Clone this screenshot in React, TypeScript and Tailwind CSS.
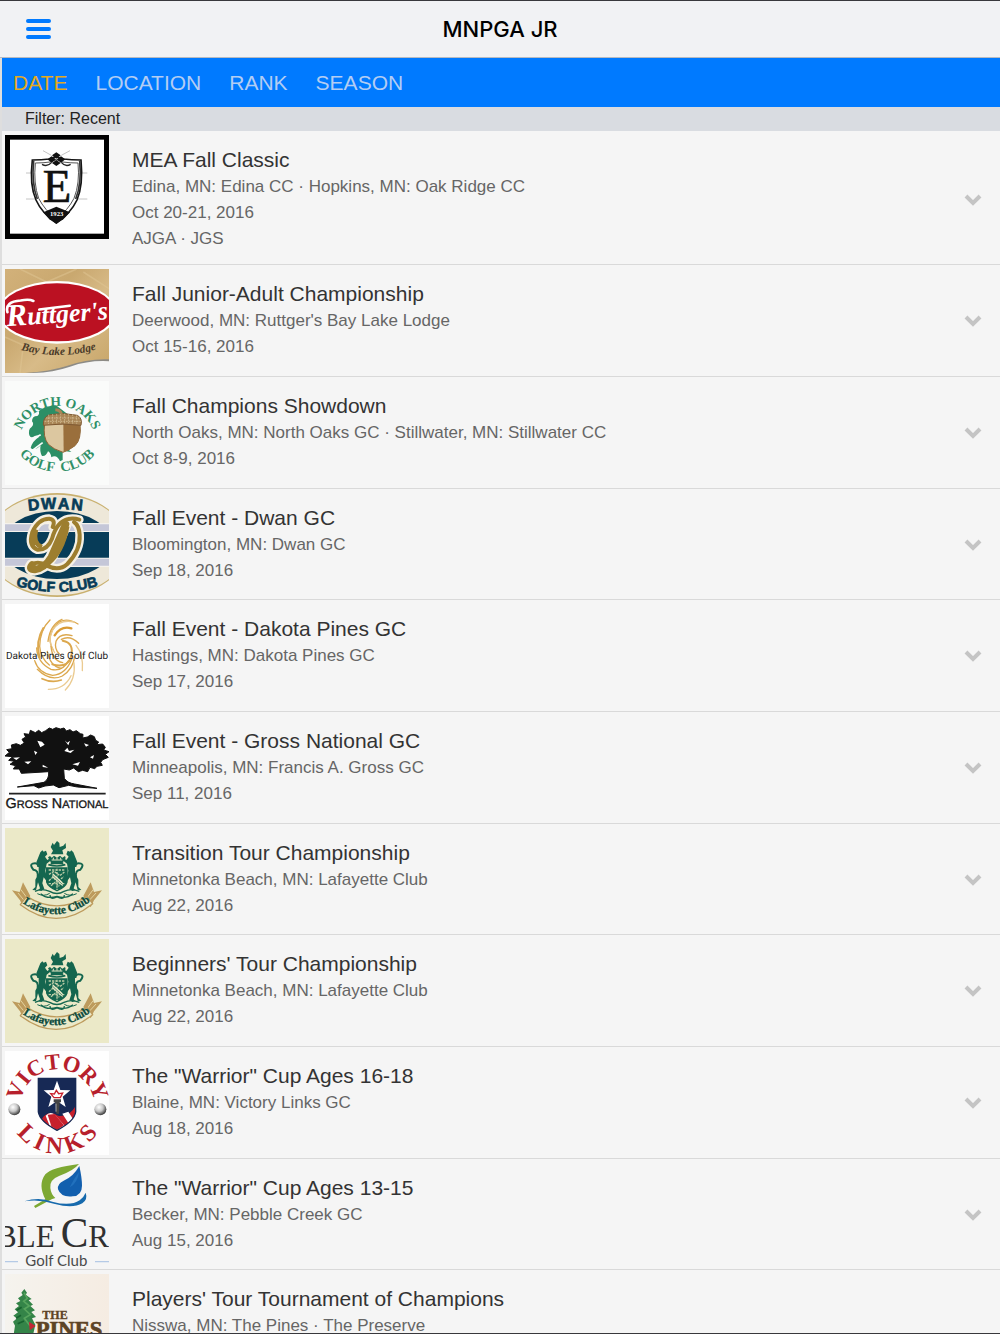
import React from "react";

const serif = "'Liberation Serif', serif";
const sans = "'Liberation Sans', Arial, sans-serif";

function Frame({ box, label, children }: { box: string; label: string; children: React.ReactNode }) {
  return (
    <svg viewBox={box} role="img" aria-label={label} className="block size-[104px] shrink-0 overflow-hidden">
      {children}
    </svg>
  );
}

function EdinaLogo() {
  return (
    <Frame box="15 15 312 312" label="Edina Country Club">
      <rect x="15" y="15" width="312" height="312" fill="#000" />
      <rect x="30" y="29" width="282" height="282" fill="#fff" />
      <path d="M78 129H262M78 207H262M129 62L154 76M210 62L184 76" stroke="#c4c4c4" strokeWidth="3" />
      <path d="M97 90Q125 90 148 87L168 80L190 87Q215 90 243 90Q250 165 231 210Q212 250 169 279Q126 250 108 210Q88 165 97 90Z" fill="#fff" stroke="#161616" strokeWidth="5" />
      <path d="M106 99Q130 99 150 96L169 89L188 96Q210 99 234 99Q240 160 222 205Q204 240 169 268Q134 240 116 205Q100 160 106 99Z" fill="#fff" stroke="#555" strokeWidth="3" />
      <path d="M101 92Q94 160 112 207M239 92Q246 160 227 207" fill="none" stroke="#333" strokeWidth="5" />
      <path d="M169 67L182 76L169 86L156 76ZM155 79L168 88L155 98L142 88ZM183 79L196 88L183 98L170 88ZM169 90L182 99L169 108L156 99Z" fill="#111" />
      <path d="M126 103Q142 112 155 97M212 103Q196 112 184 97" fill="none" stroke="#222" strokeWidth="4" />
      <text x="171" y="216" textAnchor="middle" fontFamily={serif} fontSize="140" fill="#111" stroke="#111" strokeWidth="2">E</text>
      <path d="M130 247L169 230L210 247L190 268L169 281L148 268Z" fill="#111" />
      <text x="170" y="257" textAnchor="middle" fontFamily={serif} fontWeight="700" fontSize="20" fill="#fff">1923</text>
    </Frame>
  );
}

function RuttgersLogo() {
  return (
    <Frame box="15 21 312 312" label="Ruttger's Bay Lake Lodge">
      <defs>
        <linearGradient id="kraft" x1="0" y1="0" x2="1" y2="1">
          <stop offset="0" stopColor="#d2b17a" />
          <stop offset=".35" stopColor="#c9a86f" />
          <stop offset=".6" stopColor="#d8bb88" />
          <stop offset="1" stopColor="#c7a568" />
        </linearGradient>
        <path id="lodge-curve" d="M40 257Q180 302 312 255" />
      </defs>
      <rect x="15" y="21" width="312" height="312" fill="url(#kraft)" />
      <path d="M60 21L140 60L230 21M15 225L70 250L60 333M250 30L327 80" fill="none" stroke="#dfc594" strokeWidth="5" opacity=".5" />
      <path d="M75 333Q150 328 200 312Q265 289 327 292V300Q270 296 210 320L180 333Z" fill="#8d8b86" />
      <path d="M100 333Q160 331 210 314Q270 294 327 298V333Z" fill="#f5f5f5" />
      <ellipse cx="171" cy="151" rx="178" ry="94" fill="#fff" />
      <ellipse cx="171" cy="151" rx="172" ry="87" fill="#bb1122" />
      <g transform="rotate(-4 171 170)">
        <text x="172" y="182" textAnchor="middle" fontFamily={serif} fontStyle="italic" fontWeight="700" fill="#fff" fontSize="78">
          <tspan fontSize="94">R</tspan>uttger's
        </text>
        <path d="M24 140Q18 108 66 108Q92 105 104 112M120 139L212 134" fill="none" stroke="#fff" strokeWidth="8" strokeLinecap="round" />
      </g>
      <text fontFamily={serif} fontStyle="italic" fontWeight="700" fontSize="34" fill="#4c3c2a" textAnchor="middle">
        <textPath href="#lodge-curve" startOffset="50%">Bay Lake Lodge</textPath>
      </text>
    </Frame>
  );
}

function NorthOaksLogo() {
  return (
    <Frame box="15 21 312 312" label="North Oaks Golf Club">
      <defs>
        <path id="oaks-top" d="M56 212A116 116 0 0 1 288 212" />
        <path id="oaks-bottom" d="M28 185A150 150 0 0 0 316 185" />
      </defs>
      <rect x="15" y="21" width="312" height="312" fill="#fafbfa" />
      <path d="M168 94Q130 98 116 112Q120 120 112 126Q96 126 96 142Q104 150 94 160Q84 166 88 184Q92 194 104 186Q112 182 118 188Q96 202 92 222Q104 232 122 214Q118 232 126 246Q138 248 144 232Q152 236 154 250Q170 240 180 262L188 258V230L214 234L196 220L215 130Z" fill="#2c8f66" />
      <path d="M86 200L122 182M96 230L128 206" stroke="#fafbfa" strokeWidth="5" />
      <path d="M134 150H240Q245 196 225 215Q208 228 189 235Q160 226 145 211Q128 190 134 150Z" fill="#dcc7a0" stroke="#8b6337" strokeWidth="3" />
      <path d="M190 150H240Q245 196 225 215Q208 228 191 234Z" fill="#9a6f3c" />
      <path d="M130 154Q128 128 150 122Q188 114 232 124Q248 132 243 154Q188 146 130 154Z" fill="#a98556" stroke="#7f5a33" strokeWidth="3" />
      <path d="M138 132L240 132M134 142H243M146 122V150M158 120V149M170 120V148M182 119V148M194 119V148M206 120V148M218 121V149M230 124V150" stroke="#e0cda6" strokeWidth="2" strokeDasharray="5 3" />
      <path d="M184 120Q182 108 166 107" fill="none" stroke="#a98556" strokeWidth="9" />
      <g fontFamily={serif} fontWeight="700" fill="#2f9067" textAnchor="middle">
        <text fontSize="41"><textPath href="#oaks-top" startOffset="50%">NORTH OAKS</textPath></text>
        <text fontSize="42"><textPath href="#oaks-bottom" startOffset="50%">GOLF{"\u00a0\u00a0"}CLUB</textPath></text>
      </g>
    </Frame>
  );
}

function DwanLogo() {
  return (
    <Frame box="15 18 312 312" label="Dwan Golf Club">
      <defs>
        <path id="dwan-top" d="M60 76Q166 56 272 76" />
        <path id="dwan-bottom" d="M24 289Q171 340 318 289" />
      </defs>
      <ellipse cx="171" cy="174" rx="212" ry="156" fill="#c9b06f" />
      <ellipse cx="171" cy="174" rx="212" ry="151" fill="#eee8d9" />
      <ellipse cx="171" cy="174" rx="167" ry="102" fill="#073c58" />
      <path d="M15 108H327V240H15Z" fill="#f5f2ec" />
      <path d="M15 112H327V132H15ZM15 215H327V236H15Z" fill="#c5c7d8" />
      <path d="M15 135H327V212H15Z" fill="#073c58" />
      {[
        { w: 26, c: "#f6f1e5" },
        { w: 12, c: "#9d7e2f" },
      ].map(({ w, c }) => (
        <g key={c} fill="none" stroke={c} strokeWidth={w} strokeLinecap="round" strokeLinejoin="round">
          <path d="M158 120Q168 98 148 95Q116 94 97 135Q84 176 112 188Q142 190 156 155Q170 104 205 96Q220 92 238 98" />
          <path d="M96 232Q116 221 140 236Q177 254 202 231Q242 190 239 143Q237 115 222 105" />
          <path d="M96 234Q85 248 104 248Q134 244 154 210L197 112" strokeWidth={w + 10} />
        </g>
      ))}
      <path d="M101 177Q91 155 108 128Q98 170 126 180M158 215Q176 198 202 118Q188 195 145 229" fill="none" stroke="#9d7e2f" strokeWidth="13" />
      <g fontFamily={sans} fontWeight="700" fill="#073c58" stroke="#073c58" strokeWidth="2" textAnchor="middle">
        <text fontSize="48"><textPath href="#dwan-top" startOffset="50%">{"D\u200aW\u200aA\u200aN"}</textPath></text>
        <text fontSize="43"><textPath href="#dwan-bottom" startOffset="50%">GOLF CLUB</textPath></text>
      </g>
    </Frame>
  );
}

function DakotaLogo() {
  return (
    <Frame box="15 18 312 312" label="Dakota Pines Golf Club">
      <rect x="15" y="18" width="312" height="312" fill="#fff" />
      <g fill="none" stroke="#dca84e" strokeWidth="4" strokeLinecap="round">
        <path d="M234 78Q190 52 165 85Q138 120 160 156" />
        <path d="M222 72Q180 62 158 96Q140 130 164 164" stroke="#eac98e" />
        <path d="M214 91Q184 82 164 112" strokeWidth="7" stroke="#d99a34" />
        <path d="M186 64Q150 80 144 130" />
        <path d="M150 66Q120 95 119 145Q121 180 148 201" />
        <path d="M130 90Q106 130 118 177" strokeWidth="6" />
        <path d="M216 113Q180 103 168 130Q162 152 178 168" />
        <path d="M236 136Q210 110 184 124" />
        <path d="M188 128Q224 134 213 178Q200 212 157 199" strokeWidth="6" />
        <path d="M110 150Q112 194 153 214Q188 222 206 188" />
        <path d="M104 188Q116 226 158 232Q197 230 215 184" />
        <path d="M112 214Q150 252 187 234Q219 214 224 176" />
        <path d="M126 242Q156 256 184 246" strokeWidth="5" />
        <path d="M196 276Q228 244 222 194M145 274Q194 274 213 233M247 218Q251 169 228 142" stroke="#ebcb91" />
        <path d="M153 145Q157 188 188 194M142 160Q150 205 184 211" />
      </g>
      <text x="171" y="182" textAnchor="middle" fontFamily="Roboto, sans-serif" fontWeight="400" fontSize="30" textRendering="geometricPrecision" fill="#222">Dakota Pines Golf Club</text>
    </Frame>
  );
}

function GrossLogo() {
  return (
    <Frame box="15 15 312 312" label="Gross National">
      <rect x="15" y="15" width="312" height="312" fill="#fff" />
      <path d="M146 182L64 187L58 174L40 174L47 164L30 160L43 151L26 148L38 137L15 135L28 124L20 116L36 113L34 102L49 98L61 103L73 96L66 85L77 78L72 68L88 70L91 58L106 65L116 58L125 65L137 59L148 51L158 55L168 50L181 54L192 51L199 60L210 56L219 63L229 59L241 68L249 70L248 81L262 78L272 72L283 77L287 88L296 93L290 101L308 99L316 109L311 117L327 122L316 130L325 139L308 146L302 154L307 163L291 166L284 173L270 169L263 182L248 178L235 182L221 171L208 177L191 174L193 202Q202 216 224 219L291 232L232 228L206 223L177 230L160 222L135 225L116 231L102 224L52 228L132 214Q148 204 146 182Z" fill="#111" stroke="#111" strokeWidth="3" strokeLinejoin="round" />
      <path d="M112 89L126 92L134 101L121 109ZM194 88L202 95L210 89L205 103ZM102 119L112 124L106 132ZM193 120L202 110L207 120L223 116L212 126ZM39 140L60 139L49 147ZM73 152L94 151L84 160ZM217 160L240 153L234 164ZM252 97L267 102L258 107ZM270 139L282 132L279 143ZM128 161L145 170L128 168Z" fill="#fff" />
      <path d="M27 248H317" stroke="#222" strokeWidth="5" />
      <text x="171" y="292" textAnchor="middle" fontFamily={sans} fontSize="43" textRendering="geometricPrecision" fill="#161616" stroke="#161616" strokeWidth="1">
        G<tspan fontSize="33">ROSS</tspan> N<tspan fontSize="33">ATIONAL</tspan>
      </text>
    </Frame>
  );
}

function Supporter() {
  return (
    <g>
      <path d="M121 88L127 82L131 86L138 83L142 94L135 101L142 111L151 105L154 111L140 122L136 143L140 160L151 173L144 180L131 163L127 181L133 198L124 204L115 201L120 196L114 178L108 202L97 201L106 192L106 170L116 151L116 128L109 118Z" fill="#14664f" />
      <path d="M113 162Q116 141 100 140Q88 125 98 122Q114 117 115 132" fill="none" stroke="#14664f" strokeWidth="6" />
    </g>
  );
}

function LafayetteLogo({ id }: { id: string }) {
  return (
    <Frame box="15 15 312 312" label="Lafayette Club">
      <defs>
        <path id={id} d="M62 236Q168 314 278 230" />
      </defs>
      <rect x="15" y="15" width="312" height="312" fill="#ebe9c8" />
      <Supporter />
      <g transform="translate(341 0) scale(-1 1)"><Supporter /></g>
      <path d="M152 72L158 59L162 66L171 54L178 60L179 72L190 68L197 60L198 75L187 82L190 94H153L159 83Z" fill="#14664f" />
      <path d="M144 103L150 99L155 104L162 98L171 104L180 98L187 104L195 99L197 105L187 121H154Z" fill="#14664f" />
      <path d="M155 111H187M160 104V110M171 104V110M182 104V110" stroke="#ebe9c8" strokeWidth="3" />
      <path d="M140 135H201V177Q197 192 171 203Q145 192 140 177Z" fill="#14664f" stroke="#14664f" strokeWidth="4" />
      <path d="M146 141H195M146 182H195M171 137V201M147 154L162 145L180 158L194 146M147 173L159 162L172 177L191 161M153 188L165 178L178 190" fill="none" stroke="#bdcda7" strokeWidth="4" strokeDasharray="7 3" />
      <path d="M158 150L188 178V190L157 162Z" fill="#ebe9c8" />
      <path d="M159 158L187 184M165 154L190 175" stroke="#14664f" strokeWidth="2" />
      <path d="M145 125Q171 133 196 125M152 121H190" fill="none" stroke="#14664f" strokeWidth="5" />
      <path d="M105 205Q125 195 149 205Q171 218 192 205Q214 195 238 205M122 212Q140 229 171 220Q198 229 219 212M150 216Q150 232 171 222Q193 232 193 216" fill="none" stroke="#14664f" strokeWidth="4" />
      <path d="M112 212Q132 222 149 211M230 212Q210 222 193 211" fill="none" stroke="#14664f" strokeWidth="3" />
      <path d="M36 202L59 207L69 178L91 219L70 253L60 232ZM306 202L282 207L272 178L250 219L272 253L282 232Z" fill="#bd9b5d" />
      <path d="M62 199L82 226M54 210L73 233M280 199L260 226M288 210L267 233" stroke="#e2d29e" strokeWidth="3" />
      <path d="M80 220Q171 277 261 220L278 242Q171 329 61 245Z" fill="#ebe9c8" stroke="#bd9b5d" strokeWidth="4" strokeLinejoin="round" />
      <text fontFamily={serif} fontWeight="700" fontSize="34" fill="#0d4b3c" stroke="#0d4b3c" strokeWidth="1" textAnchor="middle">
        <textPath href={"#" + id} startOffset="50%">Lafayette Club</textPath>
      </text>
    </Frame>
  );
}

function VictoryLogo() {
  return (
    <Frame box="15 25 312 312" label="Victory Links">
      <defs>
        <path id="victory-top" d="M60 196A112 116 0 1 1 284 196" />
        <path id="victory-bottom" d="M24 190A148 142 0 0 0 320 190" />
        <clipPath id="victory-shield"><path d="M115 107H227V208Q223 236 171 263Q119 236 115 208Z" /></clipPath>
        <radialGradient id="golf-ball" cx=".38" cy=".32" r=".7">
          <stop offset="0" stopColor="#fff" />
          <stop offset=".5" stopColor="#c8c8c8" />
          <stop offset="1" stopColor="#343434" />
        </radialGradient>
      </defs>
      <rect x="15" y="25" width="312" height="312" fill="#fefefe" />
      <g clipPath="url(#victory-shield)">
        <rect x="115" y="105" width="112" height="160" fill="#172955" />
        <path d="M125 230Q143 201 174 219Q208 224 227 190V270H125Z" fill="#c7202c" />
        <path d="M137 219Q150 204 165 216L194 249L171 262L148 247ZM187 213L205 207L219 229L205 241Z" fill="#fff" />
        <path d="M143 216L164 214L192 248L171 263L154 251Z" fill="#c7202c" />
      </g>
      <path d="M115 107H227V208Q223 236 171 263Q119 236 115 208Z" fill="none" stroke="#172955" strokeWidth="4" />
      <path d="M171 114L181 142L211 143L188 162L197 193L171 175L145 193L154 162L131 143L161 142Z" fill="#fff" />
      <path d="M152 153L163 154L169 143L176 153L188 151L181 165H162Z" fill="none" stroke="#c7202c" strokeWidth="4" />
      <path d="M161 170H183V179H179L177 213H169L166 179H161Z" fill="#444" />
      <path d="M168 183V207" stroke="#ddd" strokeWidth="2" />
      <circle cx="43" cy="200" r="18" fill="url(#golf-ball)" />
      <circle cx="301" cy="200" r="18" fill="url(#golf-ball)" />
      <g fontFamily={serif} fontWeight="700" fill="#b71f2c" textAnchor="middle">
        <text fontSize="68"><textPath href="#victory-top" startOffset="50%">VICTORY</textPath></text>
        <text fontSize="72"><textPath href="#victory-bottom" startOffset="50%">{"L\u2009I\u2009N\u2009K\u2009S"}</textPath></text>
      </g>
    </Frame>
  );
}

function PebbleLogo() {
  return (
    <Frame box="15 23 312 312" label="Pebble Creek Golf Club">
      <path d="M237 26Q221 46 177 62Q148 73 151 98Q153 117 166 128L155 132L106 158L102 152L136 132Q113 88 136 57Q155 36 237 26Z" fill="#7da832" />
      <path d="M238 32Q246 68 246 91Q246 121 218 123Q183 127 174 102Q171 85 191 76Q219 65 238 32Z" fill="#125fae" />
      <path d="M237 50Q233 84 209 96Q220 72 237 50Z" fill="#2171bd" />
      <path d="M73 138Q117 123 157 139Q211 154 239 135Q250 128 257 112Q264 132 247 144Q218 161 165 146Q118 130 73 138Z" fill="#176aad" />
      <g fontFamily={serif} fill="#303030">
        <text x="164" y="274" textAnchor="end" fontSize="93">BLE</text>
        <text x="182" y="274" fontSize="124">C<tspan fontSize="93">R</tspan></text>
      </g>
      <text x="169" y="332" textAnchor="middle" fontFamily="Lato, sans-serif" fontSize="45" fill="#4a4a4a">
        Golf{"\u00a0"}Club
      </text>
      <path d="M15 319H54M285 319H327" stroke="#b5cae6" strokeWidth="4" />
    </Frame>
  );
}

function PinesLogo() {
  return (
    <Frame box="15 357 312 312" label="The Pines">
      <defs>
        <linearGradient id="pines-paper" x1="0" x2="1">
          <stop offset="0" stopColor="#f5f3ee" />
          <stop offset="1" stopColor="#f5ece2" />
        </linearGradient>
      </defs>
      <rect x="15" y="357" width="312" height="312" fill="url(#pines-paper)" />
      <path d="M73 402L81 413L77 419L95 432L86 436L99 449L91 453L105 466L94 471L108 486L96 490L106 509L98 545H40L45 512L39 500L51 490L40 482L54 472L44 463L57 453L48 445L61 438L54 430L68 420L64 413Z" fill="#348448" />
      <path d="M72 413L82 430L71 439L88 453L73 462L91 479L73 490L90 512" fill="none" stroke="#57a45d" strokeWidth="5" />
      <path d="M48 490L63 481M50 466L65 457M53 506L72 498" stroke="#17632f" strokeWidth="5" />
      <path d="M87 500L107 513L89 526Z" fill="#c32635" />
      <g fontFamily={serif} fontWeight="700" fill="#5d4325">
        <text x="127" y="492" fontSize="36" stroke="#5d4325" strokeWidth="1">THE</text>
        <text x="107" y="546" fontSize="68" stroke="#5d4325" strokeWidth="2">PINES</text>
      </g>
    </Frame>
  );
}

type Tournament = { title: string; lines: string[]; logo: React.ReactNode };

const tournaments: Tournament[] = [
  { title: "MEA Fall Classic", lines: ["Edina, MN: Edina CC · Hopkins, MN: Oak Ridge CC", "Oct 20-21, 2016", "AJGA · JGS"], logo: <EdinaLogo /> },
  { title: "Fall Junior-Adult Championship", lines: ["Deerwood, MN: Ruttger's Bay Lake Lodge", "Oct 15-16, 2016"], logo: <RuttgersLogo /> },
  { title: "Fall Champions Showdown", lines: ["North Oaks, MN: North Oaks GC · Stillwater, MN: Stillwater CC", "Oct 8-9, 2016"], logo: <NorthOaksLogo /> },
  { title: "Fall Event - Dwan GC", lines: ["Bloomington, MN: Dwan GC", "Sep 18, 2016"], logo: <DwanLogo /> },
  { title: "Fall Event - Dakota Pines GC", lines: ["Hastings, MN: Dakota Pines GC", "Sep 17, 2016"], logo: <DakotaLogo /> },
  { title: "Fall Event - Gross National GC", lines: ["Minneapolis, MN: Francis A. Gross GC", "Sep 11, 2016"], logo: <GrossLogo /> },
  { title: "Transition Tour Championship", lines: ["Minnetonka Beach, MN: Lafayette Club", "Aug 22, 2016"], logo: <LafayetteLogo id="crest-transition" /> },
  { title: "Beginners' Tour Championship", lines: ["Minnetonka Beach, MN: Lafayette Club", "Aug 22, 2016"], logo: <LafayetteLogo id="crest-beginners" /> },
  { title: 'The "Warrior" Cup Ages 16-18', lines: ["Blaine, MN: Victory Links GC", "Aug 18, 2016"], logo: <VictoryLogo /> },
  { title: 'The "Warrior" Cup Ages 13-15', lines: ["Becker, MN: Pebble Creek GC", "Aug 15, 2016"], logo: <PebbleLogo /> },
  { title: "Players' Tour Tournament of Champions", lines: ["Nisswa, MN: The Pines · The Preserve"], logo: <PinesLogo /> },
];

function TournamentRow({ item }: { item: Tournament }) {
  return (
    <li className="group flex shrink-0 border-b border-[#d9d9d9] pt-1 pr-[18px] pb-[3px] pl-[3px] nth-[3n+1]:not-first:pb-[2px] first:pb-0">
      {item.logo}
      <div className="ml-[23px] min-w-0 flex-1 pt-[11px] pb-3 group-last:pb-20">
        <h2 className="truncate text-[21px] leading-7 text-[#333]">{item.title}</h2>
        {item.lines.map((line) => (
          <p key={line} className="truncate text-[17px] leading-[26px] text-[#666]">{line}</p>
        ))}
      </div>
      <button type="button" aria-label={"Show details for " + item.title} className="self-center">
        <svg viewBox="0 0 18 12" className="block h-3 w-[18px]" fill="none" stroke="#c4c4c4" strokeWidth="4">
          <path d="M2 2L9 9L16 2" />
        </svg>
      </button>
    </li>
  );
}

const tabs = ["DATE", "LOCATION", "RANK", "SEASON"];

export default function App() {
  return (
    <div className="flex h-screen flex-col overflow-hidden border-y border-[#38383c] bg-[#f5f5f5] font-['Liberation_Sans',Arial,sans-serif]">
      <header className="grid h-[57px] shrink-0 grid-cols-[1fr_auto_1fr] items-center border-b border-[#b7bac0] bg-[#f1f2f4] px-[26px]">
        <button type="button" aria-label="Menu" className="justify-self-start">
          <svg viewBox="0 0 25 20" className="block h-5 w-[25px]" fill="none" stroke="#007aff" strokeWidth="4" strokeLinecap="round">
            <path d="M2 2H23M2 10H23M2 18H23" />
          </svg>
        </button>
        <h1 className="font-['Inter',sans-serif] text-[22px] leading-7 font-medium text-black">MNPGA JR</h1>
      </header>
      <div className="flex min-h-0 flex-1 flex-col border-l-2 border-[#dedede]">
        <nav aria-label="Sort tournaments" className="flex h-[49px] shrink-0 items-center gap-7 bg-[#007aff] px-[11px]">
          {tabs.map((tab, i) => (
            <button key={tab} type="button" aria-pressed={i === 0} className="text-[21px] leading-7 text-[#b3cdf3] aria-pressed:text-[#e6aa1c]">
              {tab}
            </button>
          ))}
        </nav>
        <p className="shrink-0 bg-[#d9dce1] px-[23px] text-base leading-6 text-[#222]">Filter: Recent</p>
        <ul className="flex min-h-0 flex-1 flex-col overflow-hidden">
          {tournaments.map((item) => (
            <TournamentRow key={item.title} item={item} />
          ))}
        </ul>
      </div>
    </div>
  );
}
